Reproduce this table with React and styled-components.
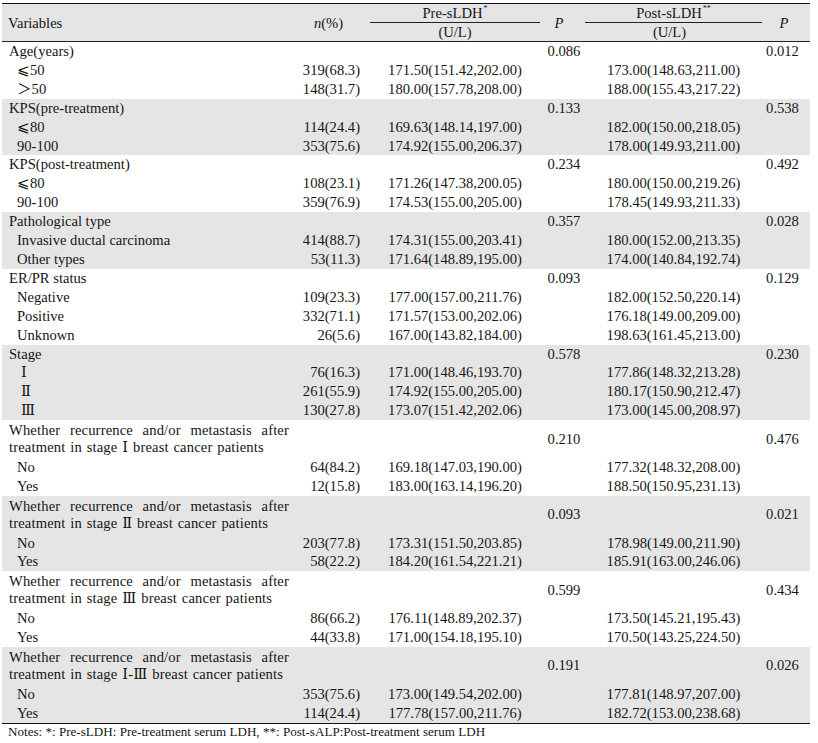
import styled, { createGlobalStyle } from 'styled-components';

const GlobalStyle = createGlobalStyle`
  body {
    margin: 0;
    background: #fff;
    font-family: "Liberation Serif", "DejaVu Serif", "Noto Sans CJK SC", serif;
    color: #151515;
  }
`;

const groups = [
  {
    title: 'Age(years)', p1: '0.086', p2: '0.012',
    rows: [
      ['⩽50', '319(68.3)', '171.50(151.42,202.00)', '173.00(148.63,211.00)'],
      ['＞50', '148(31.7)', '180.00(157.78,208.00)', '188.00(155.43,217.22)'],
    ],
  },
  {
    title: 'KPS(pre-treatment)', p1: '0.133', p2: '0.538',
    rows: [
      ['⩽80', '114(24.4)', '169.63(148.14,197.00)', '182.00(150.00,218.05)'],
      ['90-100', '353(75.6)', '174.92(155.00,206.37)', '178.00(149.93,211.00)'],
    ],
  },
  {
    title: 'KPS(post-treatment)', p1: '0.234', p2: '0.492',
    rows: [
      ['⩽80', '108(23.1)', '171.26(147.38,200.05)', '180.00(150.00,219.26)'],
      ['90-100', '359(76.9)', '174.53(155.00,205.00)', '178.45(149.93,211.33)'],
    ],
  },
  {
    title: 'Pathological type', p1: '0.357', p2: '0.028',
    rows: [
      ['Invasive ductal carcinoma', '414(88.7)', '174.31(155.00,203.41)', '180.00(152.00,213.35)'],
      ['Other types', '53(11.3)', '171.64(148.89,195.00)', '174.00(140.84,192.74)'],
    ],
  },
  {
    title: 'ER/PR status', p1: '0.093', p2: '0.129',
    rows: [
      ['Negative', '109(23.3)', '177.00(157.00,211.76)', '182.00(152.50,220.14)'],
      ['Positive', '332(71.1)', '171.57(153.00,202.06)', '176.18(149.00,209.00)'],
      ['Unknown', '26(5.6)', '167.00(143.82,184.00)', '198.63(161.45,213.00)'],
    ],
  },
  {
    title: 'Stage', p1: '0.578', p2: '0.230',
    rows: [
      ['Ⅰ', '76(16.3)', '171.00(148.46,193.70)', '177.86(148.32,213.28)'],
      ['Ⅱ', '261(55.9)', '174.92(155.00,205.00)', '180.17(150.90,212.47)'],
      ['Ⅲ', '130(27.8)', '173.07(151.42,202.06)', '173.00(145.00,208.97)'],
    ],
  },
  {
    title: 'Whether recurrence and/or metastasis after treatment in stage Ⅰ breast cancer patients',
    wrap: true, p1: '0.210', p2: '0.476',
    rows: [
      ['No', '64(84.2)', '169.18(147.03,190.00)', '177.32(148.32,208.00)'],
      ['Yes', '12(15.8)', '183.00(163.14,196.20)', '188.50(150.95,231.13)'],
    ],
  },
  {
    title: 'Whether recurrence and/or metastasis after treatment in stage Ⅱ breast cancer patients',
    wrap: true, p1: '0.093', p2: '0.021',
    rows: [
      ['No', '203(77.8)', '173.31(151.50,203.85)', '178.98(149.00,211.90)'],
      ['Yes', '58(22.2)', '184.20(161.54,221.21)', '185.91(163.00,246.06)'],
    ],
  },
  {
    title: 'Whether recurrence and/or metastasis after treatment in stage Ⅲ breast cancer patients',
    wrap: true, p1: '0.599', p2: '0.434',
    rows: [
      ['No', '86(66.2)', '176.11(148.89,202.37)', '173.50(145.21,195.43)'],
      ['Yes', '44(33.8)', '171.00(154.18,195.10)', '170.50(143.25,224.50)'],
    ],
  },
  {
    title: 'Whether recurrence and/or metastasis after treatment in stage Ⅰ-Ⅲ breast cancer patients',
    wrap: true, p1: '0.191', p2: '0.026',
    rows: [
      ['No', '353(75.6)', '173.00(149.54,202.00)', '177.81(148.97,207.00)'],
      ['Yes', '114(24.4)', '177.78(157.00,211.76)', '182.72(153.00,238.68)'],
    ],
  },
];

const Page = styled.div`
  padding: 3px 0 0 2px;
  width: 808px;
`;

const Table = styled.table`
  width: 808px;
  border-collapse: collapse;
  table-layout: fixed;
  font-size: 14.6px;
  border-top: 1.5px solid #111;
  border-bottom: 1.5px solid #111;
`;

const Head = styled.thead`
  background: #e5e5e5;
  border-bottom: 1px solid #222;
`;

const HeadCell = styled.th`
  font-weight: normal;
  height: 18px;
  line-height: 18px;
  padding: 0;
  text-align: ${p => p.$align || 'center'};
  padding-left: ${p => p.$pl || 0}px;
  padding-right: ${p => p.$pr || 0}px;
  font-style: ${p => (p.$italic ? 'italic' : 'normal')};
  vertical-align: middle;
`;

const Upright = styled.span`
  font-style: normal;
`;

const Spanned = styled.div`
  margin: 0 ${p => p.$inset}px;
  border-bottom: 1px solid #222;
  line-height: 18px;
`;

const Star = styled.sup`
  font-size: 8px;
  vertical-align: top;
  line-height: 10px;
  margin-left: 1px;
`;

const Group = styled.tbody`
  background: ${p => (p.$shaded ? '#e5e5e5' : '#fff')};
`;

const Cell = styled.td`
  padding: 0;
  height: 18.9px;
  line-height: 18.9px;
  white-space: nowrap;
  text-align: ${p => p.$align || 'left'};
  padding-left: ${p => p.$pl || 0}px;
  padding-right: ${p => p.$pr || 0}px;
  vertical-align: middle;
`;

const TitleCell = styled.td`
  padding: ${p => (p.$wrap ? '2px 3px 2px 7px' : '0 0 0 7px')};
  height: ${p => (p.$wrap ? '33.7px' : '18.9px')};
  line-height: ${p => (p.$wrap ? '16.9px' : '18.9px')};
  text-align: ${p => (p.$wrap ? 'justify' : 'left')};
  white-space: ${p => (p.$wrap ? 'normal' : 'nowrap')};
  letter-spacing: ${p => (p.$wrap ? '0.15px' : '0')};
  word-spacing: ${p => (p.$wrap ? '1px' : '0')};
  vertical-align: middle;
`;

const Notes = styled.p`
  margin: 0;
  padding-left: 6px;
  font-size: 13.1px;
  line-height: 16px;
`;

const App = () => (
  <Page>
    <GlobalStyle />
    <Table>
      <colgroup>
        <col style={{ width: 290 }} />
        <col style={{ width: 73 }} />
        <col style={{ width: 180 }} />
        <col style={{ width: 38 }} />
        <col style={{ width: 181 }} />
        <col style={{ width: 46 }} />
      </colgroup>
      <Head>
        <tr>
          <HeadCell rowSpan={2} $align="left" $pl={6}>Variables</HeadCell>
          <HeadCell rowSpan={2} $italic>
            n<Upright>(%)</Upright>
          </HeadCell>
          <HeadCell>
            <Spanned $inset={5}>Pre-sLDH<Star>*</Star></Spanned>
          </HeadCell>
          <HeadCell rowSpan={2} $italic $pr={10}>P</HeadCell>
          <HeadCell>
            <Spanned $inset={2}>Post-sLDH<Star>**</Star></Spanned>
          </HeadCell>
          <HeadCell rowSpan={2} $italic $pr={6}>P</HeadCell>
        </tr>
        <tr>
          <HeadCell>(U/L)</HeadCell>
          <HeadCell $pr={8}>(U/L)</HeadCell>
        </tr>
      </Head>
      {groups.map((g, gi) => (
        <Group key={g.title} $shaded={gi % 2 === 1}>
          <tr>
            <TitleCell $wrap={g.wrap}>{g.title}</TitleCell>
            <Cell />
            <Cell />
            <Cell $align="center">{g.p1}</Cell>
            <Cell />
            <Cell $align="center" $pr={9}>{g.p2}</Cell>
          </tr>
          {g.rows.map(r => (
            <tr key={r[0]}>
              <Cell $pl={g.title === 'Stage' ? 19 : 15}>{r[0]}</Cell>
              <Cell $align="right" $pr={5}>{r[1]}</Cell>
              <Cell $align="center">{r[2]}</Cell>
              <Cell />
              <Cell $align="center">{r[3]}</Cell>
              <Cell />
            </tr>
          ))}
        </Group>
      ))}
    </Table>
    <Notes>Notes: *: Pre-sLDH: Pre-treatment serum LDH, **: Post-sALP:Post-treatment serum LDH</Notes>
  </Page>
);

export default App;
